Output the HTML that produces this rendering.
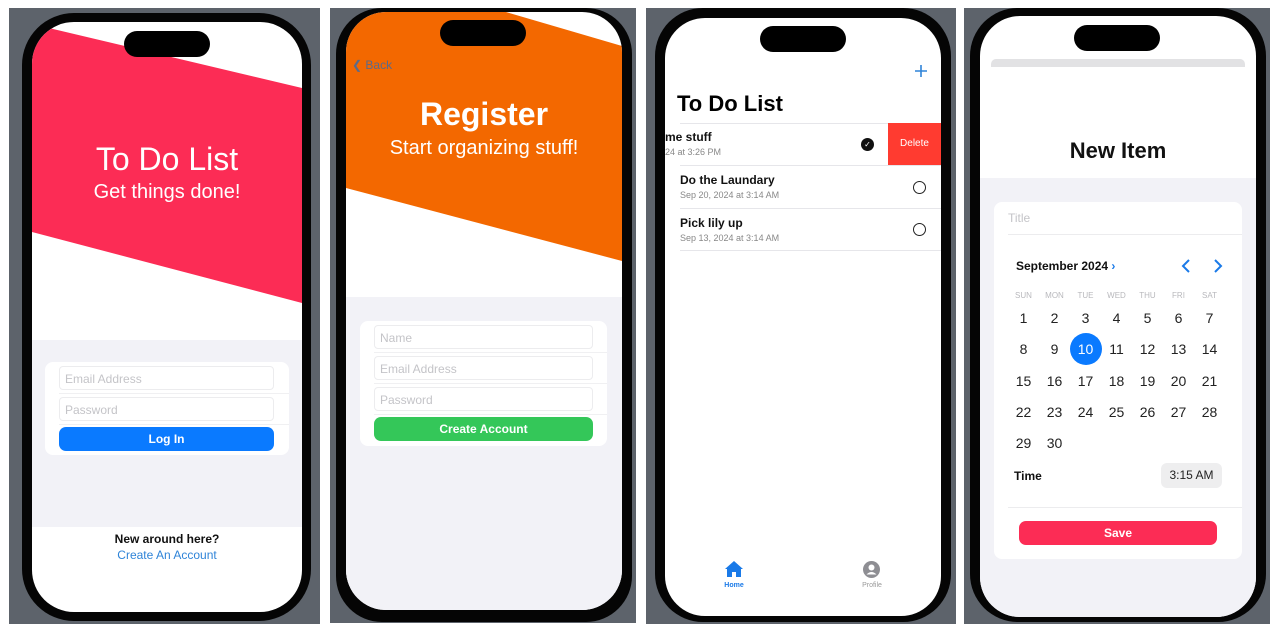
<!DOCTYPE html>
<html><head><meta charset="utf-8"><style>
*{margin:0;padding:0;box-sizing:border-box}
body{width:1280px;height:632px;background:#fff;position:relative;overflow:hidden;font-family:"Liberation Sans",sans-serif}
.a{position:absolute}
.panel{position:absolute;background:#5d636b}
.body{position:absolute;background:#050505;border-radius:52px}
.scr{position:absolute;background:#fff;border-radius:42px;overflow:hidden}
.island{position:absolute;background:#000;border-radius:14px;height:26px;width:86px}
.c{text-align:center}
.fld{position:absolute;background:#fff;border:1px solid #ececee;border-radius:4px;color:#c4c4c8;font-size:12px;padding:5px 5px;height:24px}
.btn{position:absolute;border-radius:7px;color:#fff;font-weight:bold;font-size:12px;text-align:center;line-height:24px;height:24px}
.line{position:absolute;height:1px;background:#e6e6ea}
.row{display:flex}.row span{width:31px;text-align:center}
</style></head><body>

<!-- Panel 1 -->
<div class="panel" style="left:9px;top:8px;width:311px;height:616px"></div>
<div class="body" style="left:22px;top:13px;width:289px;height:608px"></div>
<div class="scr" style="left:32px;top:22px;width:270px;height:590px">
  <svg class="a" style="left:0;top:0" width="270" height="320"><polygon points="0,2 270,66 270,281 0,210" fill="#fc2c55"/></svg>
  <div class="a c" style="left:0;width:270px;top:119px;color:#fff;font-size:32px">To Do List</div>
  <div class="a c" style="left:0;width:270px;top:159px;color:#fff;font-size:20px">Get things done!</div>
  <div class="a" style="left:0;top:318px;width:270px;height:187px;background:#f2f2f7"></div>
  <div class="a" style="left:13px;top:340px;width:244px;height:93px;background:#fff;border-radius:8px"></div>
  <div class="fld" style="left:27px;top:344px;width:215px">Email Address</div>
  <div class="line" style="left:27px;top:371px;width:230px;background:#f0f0f2"></div>
  <div class="fld" style="left:27px;top:375px;width:215px">Password</div>
  <div class="line" style="left:27px;top:402px;width:230px;background:#f0f0f2"></div>
  <div class="btn" style="left:27px;top:405px;width:215px;background:#0a7aff">Log In</div>
  <div class="a c" style="left:0;width:270px;top:510px;font-size:12px;font-weight:bold;color:#111">New around here?</div>
  <div class="a c" style="left:0;width:270px;top:526px;font-size:12px;color:#2f84d8">Create An Account</div>
</div>
<div class="island" style="left:124px;top:31px"></div>

<!-- Panel 2 -->
<div class="panel" style="left:330px;top:8px;width:306px;height:615px"></div>
<div class="body" style="left:336px;top:8px;width:296px;height:614px;border-radius:46px"></div>
<div class="scr" style="left:346px;top:12px;width:276px;height:598px;border-radius:40px">
  <svg class="a" style="left:0;top:0" width="276" height="300"><polygon points="0,0 160,0 276,34 276,249 0,176" fill="#f36800"/></svg>
  <div class="a" style="left:6px;top:46px;color:#5a6a8a;font-size:12px">&#10094; Back</div>
  <div class="a c" style="left:0;width:276px;top:84px;color:#fff;font-size:32px;font-weight:bold">Register</div>
  <div class="a c" style="left:0;width:276px;top:125px;color:#fff;font-size:20px">Start organizing stuff!</div>
  <div class="a" style="left:0;top:285px;width:276px;height:320px;background:#f2f2f7"></div>
  <div class="a" style="left:14px;top:309px;width:247px;height:125px;background:#fff;border-radius:8px"></div>
  <div class="fld" style="left:28px;top:313px;width:219px">Name</div>
  <div class="line" style="left:28px;top:340px;width:233px;background:#f0f0f2"></div>
  <div class="fld" style="left:28px;top:344px;width:219px">Email Address</div>
  <div class="line" style="left:28px;top:371px;width:233px;background:#f0f0f2"></div>
  <div class="fld" style="left:28px;top:375px;width:219px">Password</div>
  <div class="line" style="left:28px;top:402px;width:233px;background:#f0f0f2"></div>
  <div class="btn" style="left:28px;top:405px;width:219px;background:#34c759">Create Account</div>
</div>
<div class="island" style="left:440px;top:20px"></div>

<!-- Panel 3 -->
<div class="panel" style="left:646px;top:8px;width:310px;height:616px"></div>
<div class="body" style="left:655px;top:8px;width:296px;height:614px;border-radius:48px"></div>
<div class="scr" style="left:665px;top:18px;width:276px;height:598px;border-radius:40px">
  <svg class="a" style="left:249px;top:46px" width="14" height="14" viewBox="0 0 14 14"><path d="M7 1V13M1 7H13" stroke="#2f84d8" stroke-width="1.6"/></svg>
  <div class="a" style="left:12px;top:73px;font-size:22px;font-weight:bold;color:#000">To Do List</div>
  <div class="line" style="left:15px;top:105px;width:261px"></div>
  <div class="a" style="left:0;top:112px;font-size:12px;font-weight:bold;color:#111">me stuff</div>
  <div class="a" style="left:0;top:129px;font-size:9px;color:#888">24 at 3:26 PM</div>
  <div class="a" style="left:196px;top:120px;width:13px;height:13px;border-radius:50%;background:#111;color:#fff;font-size:8px;line-height:13px;text-align:center">&#10003;</div>
  <div class="a c" style="left:223px;top:105px;width:53px;height:42px;background:#ff3b30;color:#fff;font-size:10px;line-height:42px">Delete</div>
  <div class="line" style="left:15px;top:147px;width:261px"></div>
  <div class="a" style="left:15px;top:155px;font-size:12px;font-weight:bold;color:#111">Do the Laundary</div>
  <div class="a" style="left:15px;top:172px;font-size:9px;color:#888">Sep 20, 2024 at 3:14 AM</div>
  <div class="a" style="left:248px;top:163px;width:13px;height:13px;border-radius:50%;border:1.5px solid #222"></div>
  <div class="line" style="left:15px;top:190px;width:261px"></div>
  <div class="a" style="left:15px;top:198px;font-size:12px;font-weight:bold;color:#111">Pick lily up</div>
  <div class="a" style="left:15px;top:215px;font-size:9px;color:#888">Sep 13, 2024 at 3:14 AM</div>
  <div class="a" style="left:248px;top:205px;width:13px;height:13px;border-radius:50%;border:1.5px solid #222"></div>
  <div class="line" style="left:15px;top:232px;width:261px"></div>
  <svg class="a" style="left:59px;top:542px" width="20" height="18" viewBox="0 0 20 18"><path d="M10 1 L1 9 L3 9 L3 17 L8 17 L8 12 L12 12 L12 17 L17 17 L17 9 L19 9 Z" fill="#1a7ae8"/></svg>
  <div class="a c" style="left:49px;width:40px;top:564px;font-size:7px;color:#1a7ae8;font-weight:bold">Home</div>
  <svg class="a" style="left:198px;top:543px" width="17" height="17" viewBox="0 0 17 17"><circle cx="8.5" cy="8.5" r="8.5" fill="#8e8e93"/><circle cx="8.5" cy="6.5" r="3" fill="#fff"/><path d="M3.5 13.5 Q8.5 8.5 13.5 13.5 Z" fill="#fff"/></svg>
  <div class="a c" style="left:187px;width:40px;top:564px;font-size:7px;color:#999">Profile</div>
</div>
<div class="island" style="left:760px;top:26px"></div>

<!-- Panel 4 -->
<div class="panel" style="left:964px;top:8px;width:306px;height:616px"></div>
<div class="body" style="left:970px;top:8px;width:296px;height:614px;border-radius:48px"></div>
<div class="scr" style="left:980px;top:16px;width:276px;height:601px;border-radius:40px">
  <div class="a" style="left:11px;top:43px;width:254px;height:8px;background:#e2e2e4;border-radius:5px 5px 0 0"></div>
  <div class="a c" style="left:0;width:276px;top:122px;font-size:22px;font-weight:bold;color:#111">New Item</div>
  <div class="a" style="left:0;top:162px;width:276px;height:440px;background:#f2f2f7"></div>
  <div class="a" style="left:14px;top:186px;width:248px;height:357px;background:#fff;border-radius:8px"></div>
  <div class="a" style="left:28px;top:195px;font-size:12px;color:#c4c4c8">Title</div>
  <div class="line" style="left:28px;top:218px;width:234px;background:#ececee"></div>
  <div class="a" style="left:36px;top:243px;font-size:12px;font-weight:bold;color:#111">September 2024 <span style="color:#1a7ae8">&#8250;</span></div>
  <svg class="a" style="left:200px;top:242px" width="12" height="16" viewBox="0 0 12 16"><path d="M9 2L3 8L9 14" stroke="#1a7ae8" stroke-width="2" fill="none"/></svg>
  <svg class="a" style="left:232px;top:242px" width="12" height="16" viewBox="0 0 12 16"><path d="M3 2L9 8L3 14" stroke="#1a7ae8" stroke-width="2" fill="none"/></svg>
  <div class="a row" style="left:28px;top:275px;width:217px;font-size:8px;color:#b8b8bc">
    <span>SUN</span><span>MON</span><span>TUE</span><span>WED</span><span>THU</span><span>FRI</span><span>SAT</span>
  </div>
  <div class="a" style="left:90px;top:317px;width:32px;height:32px;border-radius:50%;background:#0a7aff"></div>
  <div class="a" style="left:28px;top:287px;width:217px;font-size:14px;color:#222;line-height:31.3px">
    <div class="row"><span>1</span><span>2</span><span>3</span><span>4</span><span>5</span><span>6</span><span>7</span></div>
    <div class="row"><span>8</span><span>9</span><span style="color:#fff">10</span><span>11</span><span>12</span><span>13</span><span>14</span></div>
    <div class="row"><span>15</span><span>16</span><span>17</span><span>18</span><span>19</span><span>20</span><span>21</span></div>
    <div class="row"><span>22</span><span>23</span><span>24</span><span>25</span><span>26</span><span>27</span><span>28</span></div>
    <div class="row"><span>29</span><span>30</span></div>
  </div>
  <div class="a" style="left:34px;top:453px;font-size:12px;font-weight:bold;color:#111">Time</div>
  <div class="a c" style="left:181px;top:447px;width:61px;height:25px;background:#eeeeef;border-radius:6px;font-size:12px;line-height:25px;color:#222">3:15 AM</div>
  <div class="line" style="left:28px;top:491px;width:234px;background:#ececee"></div>
  <div class="btn" style="left:39px;top:505px;width:198px;background:#fc2c55">Save</div>
</div>
<div class="island" style="left:1074px;top:25px"></div>

</body></html>
